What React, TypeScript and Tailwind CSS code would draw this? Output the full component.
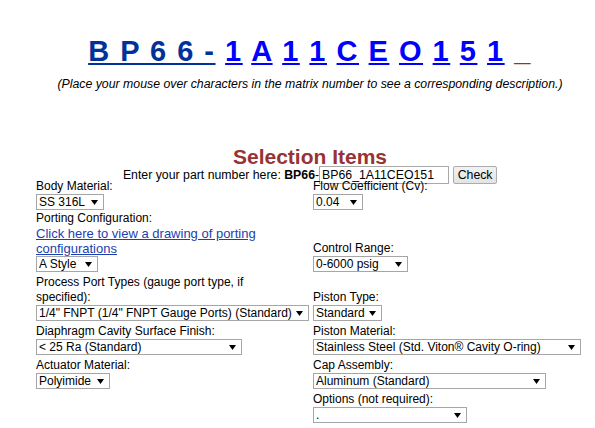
import React from 'react';

const chars = ['1', 'A', '1', '1', 'C', 'E', 'O', '1', '5', '1'];

const Sel = ({ className, value }: { className: string; value: string }) => (
    <div
        className={`flex h-[16px] items-center justify-between border border-[#a6a6a6] bg-white pl-[2px] pr-[5px] leading-[14px] ${className}`}
    >
        <span className="whitespace-nowrap">{value}</span>
        <svg width="7" height="5" viewBox="0 0 7 5" className="shrink-0">
            <path d="M0 0h7L3.5 5z" fill="#000" />
        </svg>
    </div>
);

const Field = ({ label, children, first }: { label: React.ReactNode; children: React.ReactNode; first?: boolean }) => (
    <div className={first ? 'pb-[1px]' : 'pb-[3px]'}>
        <div className="max-w-[260px]">{label}</div>
        {children}
    </div>
);

const App = () => {
    return (
        <div className="min-h-[428px] w-[595px] bg-white font-['Arial','Liberation_Sans',sans-serif] text-black">
            <div className="ml-[25px] w-[570px] text-center">
                {/* matrix number */}
                <div className="pt-[35px] text-[29px] font-bold leading-[32px] tracking-[1.5px] whitespace-nowrap">
                    <a className="text-[#003399] underline">B P 6 6 -</a>{' '}
                    {chars.map((c, i) => (
                        <React.Fragment key={i}>
                            <a className="text-[#0000ff] underline">{c}</a>{' '}
                        </React.Fragment>
                    ))}
                    <span className="text-[#993333]">_</span>
                </div>
                <p className="mt-[10px] text-[12.3px] italic leading-[15px]">
                    (Place your mouse over characters in the matrix number to see a corresponding description.)
                </p>

                <h2 className="mt-[55px] text-[21px] font-bold leading-[19px] text-[#993333]">Selection Items</h2>
                <div className="flex h-[13px] items-start justify-center text-[12.3px]">
                    <span className="leading-[18px] whitespace-nowrap">
                        Enter your part number here: <b>BP66</b>-
                    </span>
                    <input
                        readOnly
                        value="BP66_1A11CEO151"
                        className="h-[18px] w-[130px] border border-[#a9a9a9] px-[2px] text-[12.3px] leading-[16px] outline-none"
                    />
                    <button className="ml-[4px] h-[18px] w-[44px] rounded-[2px] border border-[#acacac] bg-gradient-to-b from-[#f2f2f2] to-[#e3e3e3] text-[12.3px] leading-[14px]">
                        Check
                    </button>
                </div>
            </div>

            <div className="ml-[36px] grid grid-cols-[277px_271px] items-end text-left text-[12px] leading-[15px]">
                <Field first label="Body Material:">
                    <Sel className="w-[68px]" value="SS 316L" />
                </Field>
                <Field first label="Flow Coefficient (Cv):">
                    <Sel className="w-[50px]" value="0.04" />
                </Field>

                <Field
                    label={
                        <>
                            Porting Configuration:
                            <a className="block text-[13px] leading-[15px] text-[#1a3fb0] underline">
                                Click here to view a drawing of porting configurations
                            </a>
                        </>
                    }
                >
                    <Sel className="w-[62px]" value="A Style" />
                </Field>
                <Field label="Control Range:">
                    <Sel className="w-[95px]" value="0-6000 psig" />
                </Field>

                <Field label="Process Port Types (gauge port type, if specified):">
                    <Sel className="w-[273px]" value={'1/4" FNPT (1/4" FNPT Gauge Ports) (Standard)'} />
                </Field>
                <Field label="Piston Type:">
                    <Sel className="w-[69px]" value="Standard" />
                </Field>

                <Field label="Diaphragm Cavity Surface Finish:">
                    <Sel className="w-[206px]" value="< 25 Ra (Standard)" />
                </Field>
                <Field label="Piston Material:">
                    <Sel className="w-[268px]" value="Stainless Steel (Std. Viton® Cavity O-ring)" />
                </Field>

                <Field label="Actuator Material:">
                    <Sel className="w-[74px]" value="Polyimide" />
                </Field>
                <Field label="Cap Assembly:">
                    <Sel className="w-[233px]" value="Aluminum (Standard)" />
                </Field>

                <div />
                <Field label="Options (not required):">
                    <Sel className="w-[154px]" value="." />
                </Field>
            </div>
        </div>
    );
};

export default App;
